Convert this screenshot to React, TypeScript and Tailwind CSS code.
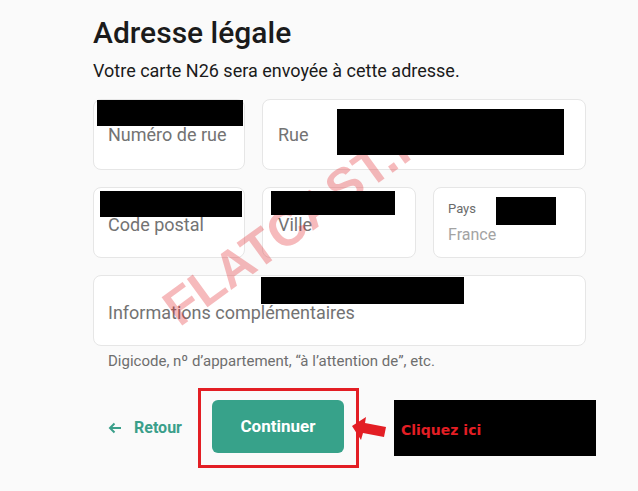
import React from 'react';

const CARD_CLASS = 'relative bg-white border border-[#e6e6e6] rounded-lg h-[71px] flex items-center';
const LABEL_CLASS = 'text-[18px] text-[#737373]';
const REDACT_CLASS = 'absolute bg-black z-20';

const App = () => {
  return (
    <div className="relative w-[638px] h-[491px] bg-[#fafafa] overflow-hidden font-['Roboto','Liberation_Sans',sans-serif] text-[#1b1b1b]">
      <div className="w-[586px] pl-[93px] pt-[15px]">
        <h1 className="text-[30px] leading-[36px] font-medium">Adresse légale</h1>
        <p className="mt-[8px] text-[18px] leading-[24px]">Votre carte N26 sera envoyée à cette adresse.</p>

        <div className="mt-[16px] flex gap-[17px]">
          <div className={`${CARD_CLASS} w-[152px] pl-[14px]`}>
            <span className={LABEL_CLASS}>Numéro de rue</span>
            <div className={`${REDACT_CLASS} left-[3px] top-0 w-[146px] h-[26px]`} />
          </div>
          <div className={`${CARD_CLASS} flex-1 pl-[15px]`}>
            <span className={LABEL_CLASS}>Rue</span>
            <div className={`${REDACT_CLASS} left-[74px] top-[9px] w-[227px] h-[46px]`} />
          </div>
        </div>

        <div className="mt-[17px] flex gap-[17px]">
          <div className={`${CARD_CLASS} w-[152px] pl-[14px] pt-[4px]`}>
            <span className={LABEL_CLASS}>Code postal</span>
            <div className={`${REDACT_CLASS} left-[6px] top-[3px] w-[142px] h-[26px]`} />
          </div>
          <div className={`${CARD_CLASS} w-[154px] pl-[15px] pt-[4px]`}>
            <span className={LABEL_CLASS}>Ville</span>
            <div className={`${REDACT_CLASS} left-[8px] top-[3px] w-[124px] h-[24px]`} />
          </div>
          <div className={`${CARD_CLASS} flex-1 pl-[14px] flex-col items-start justify-center`}>
            <span className="text-[13px] leading-[16px] text-[#6b6b6b]">Pays</span>
            <span className="mt-[9px] text-[16px] leading-[18px] text-[#a3a3a3]">France</span>
            <div className={`${REDACT_CLASS} left-[62px] top-[9px] w-[60px] h-[28px]`} />
          </div>
        </div>

        <div className={`${CARD_CLASS} mt-[17px] pl-[14px] pt-[3px]`}>
          <span className={LABEL_CLASS}>Informations complémentaires</span>
          <div className={`${REDACT_CLASS} left-[167px] top-[1px] w-[203px] h-[27px]`} />
        </div>

        <p className="mt-[5px] pl-[15px] text-[15px] leading-[20px] text-[#6e6e6e]">
          Digicode, nº d’appartement, “à l’attention de”, etc.
        </p>

        <div className="mt-[17px] flex items-center">
          <button className="shrink-0 flex items-center gap-[12px] ml-[15px] text-[#3a9f8a] font-bold text-[16px]">
            <svg width="14" height="12" viewBox="0 0 14 12" fill="none" stroke="currentColor" strokeWidth="2">
              <path d="M13 6H2M6.5 1.5L2 6l4.5 4.5" />
            </svg>
            Retour
          </button>
          <div className="shrink-0 ml-[16px] border-[3px] border-[#e31e24] pt-[9px] pb-[12px] pl-[11px] pr-[12px]">
            <button className="w-[132px] h-[53px] rounded-md bg-[#37a28a] text-white font-bold text-[17px]">
              Continuer
            </button>
          </div>
          <svg width="35" height="26" viewBox="0 0 35 26" className="shrink-0 -ml-[7px] mt-[4px]">
            <polygon points="0,9 14,0 13,6 34,10 32,20 11,16 9,23" fill="#e31e24" />
          </svg>
          <div className="shrink-0 ml-[7px] w-[202px] h-[56px] bg-black flex items-center pl-[7px] pt-[4px]">
            <span className="font-['DejaVu_Sans',sans-serif] font-bold text-[14px] text-[#e31e24]">Cliquez ici</span>
          </div>
        </div>
      </div>

      <div className="absolute z-10 left-[295px] top-[222px] -translate-x-1/2 -translate-y-1/2 -rotate-[36deg] whitespace-nowrap pointer-events-none font-['Liberation_Sans',sans-serif] font-bold text-[51px] leading-none text-[#e31e24] opacity-[0.3]">
        FLATCAST.fr
      </div>
    </div>
  );
};

export default App;
